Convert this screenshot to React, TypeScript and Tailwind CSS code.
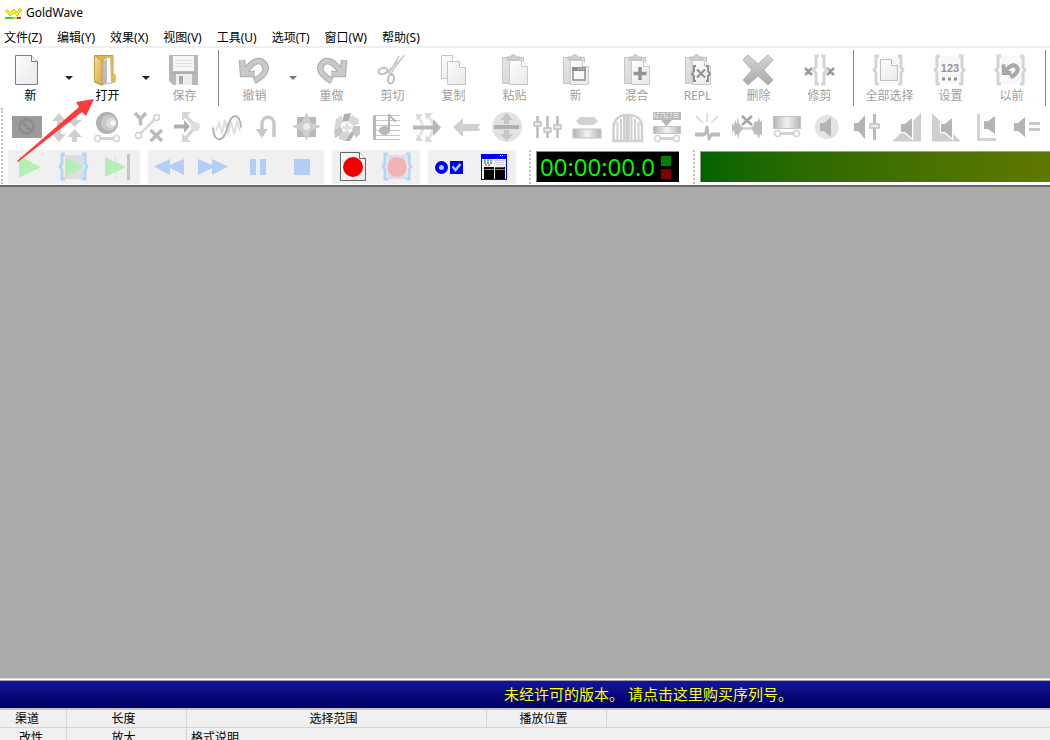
import { ReactNode } from "react";
import { clsx } from "clsx";

const MENU = ["文件(Z)", "编辑(Y)", "效果(X)", "视图(V)", "工具(U)", "选项(T)", "窗口(W)", "帮助(S)"];

function Svg({ children, w = 32 }: { children: ReactNode; w?: number }) {
  return (
    <svg
      aria-hidden="true"
      width={w}
      height={32}
      viewBox={`0 0 ${w} 32`}
      fill="none"
      className="block shrink-0 overflow-visible"
    >
      {children}
    </svg>
  );
}

// shared shapes

function Page({ x, y, w, h, stroke = "#c4c4c4" }: { x: number; y: number; w: number; h: number; stroke?: string }) {
  return (
    <g transform={`translate(${x + 0.5} ${y + 0.5})`} stroke={stroke}>
      <path d={`M0 0H${w - 6}L${w} 6V${h}H0Z`} fill="url(#paper)" />
      <path d={`M${w - 6} 0V6H${w}`} fill="#fff" />
    </g>
  );
}

function Clipboard({ children }: { children?: ReactNode }) {
  return (
    <>
      <rect x="4.5" y="3.5" width="21" height="26" fill="url(#steel)" stroke="#c6c6c6" />
      <path d="M9 6V3h4c0-3 5-3 5 0h4v3Z" fill="#d0d0d0" stroke="#bdbdbd" />
      <Page x={11} y={6} w={18} h={24} stroke="#cacaca" />
      {children}
    </>
  );
}

function Braces({ x1, x2, y1 = 2, y2 = 30, stroke = "#d4d4d4", d = 4 }: { x1: number; x2: number; y1?: number; y2?: number; stroke?: string; d?: number }) {
  const mid = (y1 + y2) / 2;
  return (
    <g stroke={stroke} strokeWidth="3">
      <path d={`M${x1 + d + 2} ${y1}H${x1 + d - 1}V${mid - 3}L${x1 + 1} ${mid}L${x1 + d - 1} ${mid + 3}V${y2}H${x1 + d + 2}`} />
      <path d={`M${x2 - d - 2} ${y1}H${x2 - d + 1}V${mid - 3}L${x2 - 1} ${mid}L${x2 - d + 1} ${mid + 3}V${y2}H${x2 - d - 2}`} />
    </g>
  );
}

function Speaker({ x, y, h = 20, outline = false }: { x: number; y: number; h?: number; outline?: boolean }) {
  return (
    <path
      transform={`translate(${x} ${y})`}
      d={`M0 ${h / 2 - 4}H4L11 0V${h}L4 ${h / 2 + 4}H0Z`}
      fill="#b4b4b4"
      stroke={outline ? "#fff" : "none"}
      strokeWidth="2.5"
      paintOrder="stroke"
    />
  );
}

function Link({ y = 27.5 }: { y?: number }) {
  return (
    <g stroke="#d2d2d2" strokeWidth="1.5" fill="#fff">
      <path d={`M9 ${y}H23`} strokeWidth="3" />
      <circle cx="6.5" cy={y} r="3" />
      <circle cx="25.5" cy={y} r="3" />
    </g>
  );
}

function CurvedArrow({ edge = "#ababab", fill = "#c9c9c9" }: { edge?: string; fill?: string }) {
  const d = "M4 6L5 20H17M6 19C13 9 19 5 24 8C31 13 28 21 16 27";
  return (
    <>
      <path d={d} stroke={edge} strokeWidth="6.5" />
      <path d={d} stroke={fill} strokeWidth="4.5" />
    </>
  );
}

const mainIcons: Record<string, ReactNode> = {
  new: <Page x={1} y={1} w={22} h={29} stroke="#7c7c7c" />,
  open: (
    <>
      <path d="M3.5 1.5H22V23H24V28H20L10 31L3.5 28Z" fill="#e2b64f" stroke="#c39a3d" />
      <path d="M13 6L17 3L21 5V29L13 30Z" fill="#fff" stroke="#a9bccb" />
      <path d="M11 10L16 5V29H11Z" fill="#b9bdc4" />
      <path d="M3.5 1.5L11 7V31L3.5 27Z" fill="url(#gold)" stroke="#c9a045" />
      <path d="M19 2H21.5V20H24.5V28H20Z" fill="#e0b757" />
    </>
  ),
  save: (
    <>
      <path d="M1 1H30V31H5L1 27Z" fill="#b8b8b8" />
      <rect x="5" y="2" width="21" height="15" fill="#f7f7f7" />
      <path d="M7 6.5H24M7 9.5H24M7 12.5H24" stroke="#ddd" />
      <path d="M3 19H28" stroke="#a6a6a6" />
      <rect x="8" y="20" width="16" height="11" fill="#ededed" />
      <rect x="11" y="22" width="4" height="8" fill="#aaa" />
    </>
  ),
  undo: <CurvedArrow />,
  redo: (
    <g transform="translate(33 0) scale(-1 1)">
      <CurvedArrow />
    </g>
  ),
  cut: (
    <>
      <path d="M29 1L14 20L11 18Z" fill="#d8d8d8" stroke="#c4c4c4" />
      <path d="M23 2L13 18L15 21Z" fill="#e0e0e0" stroke="#c4c4c4" />
      <ellipse cx="7" cy="17" rx="4.5" ry="3" stroke="#bdbdbd" strokeWidth="2" transform="rotate(-15 7 17)" />
      <ellipse cx="15" cy="25" rx="3" ry="4.5" stroke="#bdbdbd" strokeWidth="2" transform="rotate(12 15 25)" />
    </>
  ),
  copy: (
    <>
      <Page x={4} y={1} w={17} h={23} />
      <Page x={10} y={7} w={18} h={23} />
    </>
  ),
  paste: <Clipboard />,
  pasteNew: (
    <Clipboard>
      <rect x="14" y="14" width="12" height="12" fill="#f8f8f8" stroke="#8e8e8e" strokeWidth="1.5" />
      <path d="M13 15H27" stroke="#8e8e8e" strokeWidth="4" />
      <path d="M19 15H26" stroke="#eee" strokeDasharray="1.5 1" />
    </Clipboard>
  ),
  mix: (
    <Clipboard>
      <path d="M20 13V26M13.5 19.5H26.5" stroke="#939393" strokeWidth="3.5" />
    </Clipboard>
  ),
  repl: (
    <Clipboard>
      <path d="M15 12H13V17L11 20L13 22V27H15M25 12H27V17L29 20L27 22V27H25M16 15.5L24 23.5M24 15.5L16 23.5" stroke="#8e8e8e" strokeWidth="2" />
    </Clipboard>
  ),
  delete: <path d="M1 6L6 1L16 10L26 1L31 6L22 16L31 26L26 31L16 22L6 31L1 26L10 16Z" fill="url(#steel2)" stroke="#b4b4b4" strokeLinejoin="round" />,
  trim: (
    <>
      <path d="M2 14L9 21M9 14L2 21M24 14L31 21M31 14L24 21" stroke="#9a9a9a" strokeWidth="2.5" />
      <Braces x1={9} x2={25} d={5} />
    </>
  ),
  selectAll: (
    <>
      <rect x="6" y="2" width="20" height="28" fill="#f8f8f8" />
      <Braces x1={0} x2={31} />
      <Page x={7} y={5} w={17} h={21} stroke="#bebebe" />
    </>
  ),
  set: (
    <>
      <rect x="6" y="2" width="20" height="28" fill="#f8f8f8" />
      <Braces x1={0} x2={31} />
      <text x="16" y="18" textAnchor="middle" fontSize="11" fontWeight="bold" fill="#949494" className="font-['Liberation_Sans',sans-serif]">
        123
      </text>
      <path d="M8 25H11M14 25H17M20 25H23" stroke="#949494" strokeWidth="3" />
    </>
  ),
  previous: (
    <>
      <rect x="6" y="2" width="20" height="28" fill="#f8f8f8" />
      <Braces x1={0} x2={31} />
      <g transform="translate(6 7) scale(.6)">
        <CurvedArrow edge="#999" fill="#aaa" />
      </g>
    </>
  ),
};

type MainItem = { icon: string; label: string; enabled?: boolean; menu?: boolean } | null;

// null is a group separator
const mainItems: MainItem[] = [
  { icon: "new", label: "新", enabled: true, menu: true },
  { icon: "open", label: "打开", enabled: true, menu: true },
  { icon: "save", label: "保存" },
  null,
  { icon: "undo", label: "撤销", menu: true },
  { icon: "redo", label: "重做" },
  { icon: "cut", label: "剪切" },
  { icon: "copy", label: "复制" },
  { icon: "paste", label: "粘贴" },
  { icon: "pasteNew", label: "新" },
  { icon: "mix", label: "混合" },
  { icon: "repl", label: "REPL" },
  { icon: "delete", label: "删除" },
  { icon: "trim", label: "修剪" },
  null,
  { icon: "selectAll", label: "全部选择" },
  { icon: "set", label: "设置" },
  { icon: "previous", label: "以前" },
  null,
];

const effects: { name: string; art: ReactNode }[] = [
  {
    name: "Censor",
    art: (
      <>
        <rect x="1" y="5" width="30" height="22" fill="#9c9c9c" />
        <circle cx="15.5" cy="15.5" r="7" stroke="#8c8c8c" strokeWidth="2.5" />
        <path d="M11 11L20 20" stroke="#8c8c8c" strokeWidth="2.5" />
      </>
    ),
  },
  {
    name: "Compressor",
    art: (
      <g fill="#cfcfcf">
        <path d="M8 2L15 10H10V23H15L8 31L1 23H6V10H1Z" />
        <path d="M21 2H26V9H31L23.5 16L16 9H21ZM23.5 18L31 26H26V31H21V26H16Z" />
      </g>
    ),
  },
  {
    name: "Doppler",
    art: (
      <>
        <circle cx="16" cy="12" r="11" fill="#b0b0b0" />
        <circle cx="18" cy="12" r="8" fill="#c8c8c8" />
        <circle cx="20" cy="12" r="5" fill="#dcdcdc" />
        <circle cx="22" cy="12" r="2.5" fill="#fff" />
        <Link />
      </>
    ),
  },
  {
    name: "Expression",
    art: (
      <>
        <path d="M4 2L9.5 8L15 2M9.5 8V14.5M19.5 19L31 30M31 19L19.5 30" stroke="#bcbcbc" strokeWidth="3.5" />
        <path d="M9 23L24 8" stroke="#d8d8d8" strokeWidth="2.5" />
        <circle cx="25.5" cy="6.5" r="3" fill="#fff" stroke="#d0d0d0" strokeWidth="1.5" />
        <circle cx="7.5" cy="24.5" r="3" fill="#fff" stroke="#d0d0d0" strokeWidth="1.5" />
      </>
    ),
  },
  {
    name: "Echo",
    art: (
      <>
        <path d="M24 15L14 4M24 16L14 28" stroke="#d6d6d6" strokeWidth="3.5" />
        <path d="M11 1H20L11 10ZM11 31H20L11 22Z" fill="#d6d6d6" />
        <circle cx="24.5" cy="15.5" r="4.5" fill="#dedede" />
        <path d="M3 13.5H13V9L19 15.5L13 22V17.5H3Z" fill="#b0b0b0" />
      </>
    ),
  },
  {
    name: "Exponential",
    art: (
      <>
        <path d="M5 20L8 12L11 22L14 9L17 23L20 10L23 23L26 11L29 20" stroke="#e0e0e0" strokeWidth="2" />
        <path d="M2 16.5C3 32 12 32 16 18C20 1 29 1 30 16.5" stroke="#b4b4b4" strokeWidth="2" />
      </>
    ),
  },
  {
    name: "Reverse",
    art: (
      <>
        <path d="M11 19V13C11 4 23 4 23 13V26" stroke="#c8c8c8" strokeWidth="3.5" />
        <path d="M5 18H17L11 27Z" fill="#c8c8c8" />
      </>
    ),
  },
  {
    name: "Flanger",
    art: (
      <>
        <rect x="6" y="6" width="19" height="20" fill="#b8b8b8" />
        <path d="M15.5 1L20 11L30 15.5L20 20L15.5 30L11 20L1 15.5L11 11Z" fill="#cecece" />
        <circle cx="15.5" cy="15.5" r="3.5" fill="#ececec" />
      </>
    ),
  },
  {
    name: "Interpolate",
    art: (
      <>
        <path d="M13 3L20 2L18 10L11 11ZM20 21L25 20L19 30H14Z" fill="#b0b0b0" />
        <path d="M5 8L11 4V12L9 17L3 19ZM21 4L28 8V13L22 15L17 10Z" fill="#d8d8d8" />
        <path d="M3 19L10 16L12 21L8 25L4 27ZM22 15H29V23L25 27L21 20Z" fill="#c6c6c6" />
        <path d="M8 25L13 20L19 22L14 30L8 28Z" fill="#d4d4d4" />
        <path d="M16 12V21M11.5 16.5H20.5" stroke="#dedede" strokeWidth="3" />
      </>
    ),
  },
  {
    name: "Pitch",
    art: (
      <>
        <path d="M2 4.5H29M2 9.5H29M2 14.5H29M2 19.5H29M2 24.5H29M2 28.5H29" stroke="#c6c6c6" />
        <path d="M3.5 4V29" stroke="#b8b8b8" strokeWidth="3" />
        <ellipse cx="13.5" cy="19.5" rx="5.5" ry="4.5" fill="#b8b8b8" />
        <path d="M18 20V3C18 7 24 7 24 11" stroke="#b4b4b4" strokeWidth="2" />
      </>
    ),
  },
  {
    name: "Mechanize",
    art: (
      <>
        <path d="M12 15L8 6M22 14L18 5M12 18L8 27M22 19L18 28" stroke="#e4e4e4" strokeWidth="3" />
        <path d="M5 3H12L6 10ZM14 2H22L15 9ZM5 30H12L6 23ZM14 31H22L15 24Z" fill="#d8d8d8" />
        <path d="M2 14.5H22V8L30 16.5L22 25V18.5H2Z" fill="#b8b8b8" />
      </>
    ),
  },
  { name: "Offset", art: <path d="M2 16L12 7V13H30L27 16L30 20H12V26Z" fill="#d0d0d0" /> },
  {
    name: "Dynamics",
    art: (
      <>
        <circle cx="16" cy="16" r="15" fill="#e2e2e2" />
        <path d="M15.5 2L22 9H18V13H13V9H9ZM13 19H18V23H22L15.5 30L9 23H13Z" fill="#c6c6c6" />
        <path d="M3 16H28" stroke="#b0b0b0" strokeWidth="4" />
      </>
    ),
  },
  {
    name: "Equalizer",
    art: (
      <>
        <path d="M6.5 5V27M16.5 5V27M26.5 5V27" stroke="#bababa" strokeWidth="2.5" />
        <g fill="#ededed" stroke="#c0c0c0" strokeWidth="1.5">
          <rect x="3" y="11" width="7" height="4" />
          <rect x="13" y="17" width="7" height="4" />
          <rect x="23" y="14" width="7" height="4" />
        </g>
      </>
    ),
  },
  {
    name: "Low pass",
    art: (
      <>
        <path d="M9 6H23L27 10L23 14H9L5 10Z" fill="#d2d2d2" />
        <rect x="2" y="18" width="28" height="9" fill="url(#tube)" stroke="#c4c4c4" />
      </>
    ),
  },
  {
    name: "Noise gate",
    art: (
      <g stroke="#d0d0d0" strokeWidth="2">
        <path d="M2.5 30V17C2.5 9 8 4 15.5 4V30ZM17.5 4C26 4 31 9 31 17V30H17.5Z" strokeWidth="2.5" />
        <path d="M6.5 11V29M10 8V29M13 5V29M20.5 5V29M24 8V29M27.5 11V29" />
      </g>
    ),
  },
  {
    name: "Noise reduction",
    art: (
      <>
        <rect x="2" y="1" width="28" height="8" fill="#bcbcbc" />
        <path d="M3 2.5H29" stroke="#f4f4f4" strokeDasharray="1 2 2 1 1 1 3 2" />
        <path d="M3 4.5H29" stroke="#f4f4f4" strokeDasharray="2 1 1 3 1 2" />
        <path d="M3 6.5H29" stroke="#f4f4f4" strokeDasharray="1 1 2 2 1 3" />
        <path d="M10 9H21L15.5 15Z" fill="#b4b4b4" />
        <rect x="2.5" y="15.5" width="27" height="7" fill="url(#tube)" stroke="#c4c4c4" />
        <Link />
      </>
    ),
  },
  {
    name: "Pop and click",
    art: (
      <>
        <path d="M16 2V11M5 5L12 12M27 5L20 12" stroke="#e0e0e0" strokeWidth="2" />
        <path d="M4 23.5H13M20 23.5H29" stroke="#bdbdbd" strokeWidth="4" />
        <path d="M11 23.5H14L16 15L18 29L20 23" stroke="#bababa" strokeWidth="2.5" />
      </>
    ),
  },
  {
    name: "Silence reduction",
    art: (
      <>
        <path d="M10 17.5H22" stroke="#d0d0d0" strokeWidth="2.5" />
        <path d="M1 12L3 15L4 9L6 13V6L8 12L10 15L12 17L10 20L8 23V28L6 23L4 25L3 19L1 22ZM31 9L29 11L28 6L26 11L24 10L22 15L20 17L22 20L24 24L26 23L28 28L29 23L31 25Z" fill="#bcbcbc" />
        <path d="M11 5L21 14M21 5L11 14" stroke="#a4a4a4" strokeWidth="2.5" />
      </>
    ),
  },
  {
    name: "Smoother",
    art: (
      <>
        <rect x="2.5" y="5.5" width="27" height="12" fill="url(#tube)" stroke="#c4c4c4" />
        <Link y={22.5} />
      </>
    ),
  },
  {
    name: "Volume",
    art: (
      <>
        <circle cx="16" cy="16" r="12" fill="#e4e4e4" />
        <Speaker x={9} y={6} />
      </>
    ),
  },
  {
    name: "Change volume",
    art: (
      <>
        <Speaker x={3} y={4} h={24} />
        <path d="M23.5 3V29" stroke="#bababa" strokeWidth="3" />
        <rect x="19" y="13" width="9" height="4" fill="#eee" stroke="#c0c0c0" strokeWidth="1.5" />
      </>
    ),
  },
  {
    name: "Fade in",
    art: (
      <>
        <path d="M1 30.5L30 2V30.5Z" fill="#cfcfcf" />
        <Speaker x={10} y={7} outline />
      </>
    ),
  },
  {
    name: "Fade out",
    art: (
      <>
        <path d="M1 2L30 30.5H1Z" fill="#cfcfcf" />
        <Speaker x={10} y={7} outline />
      </>
    ),
  },
  {
    name: "Match volume",
    art: (
      <>
        <path d="M7.5 3V28.5H25" stroke="#d2d2d2" strokeWidth="3" />
        <Speaker x={13} y={5} h={18} />
      </>
    ),
  },
  {
    name: "Maximize volume",
    art: (
      <>
        <Speaker x={3} y={6} />
        <path d="M18 12.5H29M18 18.5H29" stroke="#cacaca" strokeWidth="3" />
      </>
    ),
  },
];

const transport: { name: string; art: ReactNode }[][] = [
  [
    { name: "Play", art: <path d="M5 5L27 16L5 27Z" fill="#b4f0b4" /> },
    {
      name: "Play selection",
      art: (
        <>
          <rect x="7" y="4" width="18" height="24" fill="#dcdee2" />
          <path d="M7 6L26 16L7 26Z" fill="#b4f0b4" />
          <Braces x1={1} x2={30} y1={3} y2={28} stroke="#b4d6f4" />
        </>
      ),
    },
    {
      name: "Play to end",
      art: (
        <>
          <path d="M13.5 4V29" stroke="#dedede" />
          <path d="M3 6L24 16L3 26Z" fill="#b4f0b4" />
          <path d="M26.5 3V29" stroke="#c4c4c4" strokeWidth="3" />
        </>
      ),
    },
  ],
  [
    { name: "Rewind", art: <path d="M0 15.5L16 8V14L30 8V24L16 17V24Z" fill="#b4ccf6" /> },
    { name: "Fast forward", art: <path d="M30 15.5L14 8V14L0 8V24L14 17V24Z" fill="#b4ccf6" /> },
    { name: "Pause", art: <path d="M8 8H14V24H8ZM18 8H24V24H18Z" fill="#b4ccf6" /> },
    { name: "Stop", art: <path d="M8 8H24V24H8Z" fill="#b4ccf6" /> },
  ],
  [
    {
      name: "Record new",
      art: (
        <>
          <Page x={2} y={1} w={25} h={28} stroke="#666" />
          <circle cx="15" cy="16" r="10" fill="#f00000" />
        </>
      ),
    },
    {
      name: "Record selection",
      art: (
        <>
          <rect x="6" y="4" width="18" height="24" fill="#dcdee2" />
          <circle cx="15" cy="16" r="10" fill="#f2b4b4" />
          <Braces x1={0} x2={30} y1={3} y2={28} stroke="#b4d6f4" />
        </>
      ),
    },
  ],
  [
    {
      name: "Control properties",
      art: (
        <>
          <circle cx="7.5" cy="16.5" r="6.5" fill="#0000f0" />
          <circle cx="7.5" cy="16.5" r="2.5" fill="#a8c8ff" />
          <rect x="16" y="10" width="13" height="13" fill="#0000f0" />
          <path d="M18.5 15.5L21.5 19L26.5 13" stroke="#a8d0ff" strokeWidth="2.5" />
        </>
      ),
    },
    {
      name: "Control window",
      art: (
        <>
          <rect x="3" y="3" width="26" height="26" fill="#0000f0" />
          <rect x="4" y="8" width="24" height="20" fill="#f0f0f0" />
          <path d="M22 4.5H23M24 4.5H25" stroke="#fff" />
          <path d="M26 4.5H28" stroke="#f00" />
          <path d="M6 9.5H15" stroke="#4c4" strokeWidth="2" strokeDasharray="2 1" />
          <path d="M6 12H15" stroke="#22f" strokeDasharray="2 1" />
          <path d="M7 14H13" stroke="#e22" strokeDasharray="2 1" />
          <path d="M17 9.5H26M17 11.5H26M17 13.5H26" stroke="#ccc" />
          <path d="M6 16H16V28H6ZM17 16H27V28H17Z" fill="#000" />
          <path d="M6 18.5H27" stroke="#888" />
          <path d="M17 16.5H26" stroke="#080" />
        </>
      ),
    },
  ],
];

function Grip() {
  return (
    <div className="flex w-2 shrink-0 self-stretch pl-px">
      <div className="w-px border-l-2 border-dotted border-[#c0c0c0]" />
    </div>
  );
}

function MainButton({ item }: { item: NonNullable<MainItem> }) {
  return (
    <div className="flex shrink-0">
      <button
        type="button"
        aria-disabled={!item.enabled}
        className={clsx(
          "flex w-[61px] flex-col items-center whitespace-nowrap pt-1.5 text-xs",
          item.enabled ? "text-black" : "text-[#a0a0a0]"
        )}
      >
        <Svg w={33}>{mainIcons[item.icon]}</Svg>
        <span className="mt-0.5 leading-4">{item.label}</span>
      </button>
      {item.menu && (
        <button type="button" aria-label={`${item.label} ▾`} className="flex w-4 items-center justify-center">
          <svg width="8" height="4" viewBox="0 0 8 4" className="block">
            <path d="M0 0H8L4 4Z" fill={item.enabled ? "#222" : "#777"} />
          </svg>
        </button>
      )}
    </div>
  );
}

function Defs() {
  return (
    <svg width="0" height="0" className="absolute" aria-hidden="true">
      <defs>
        <linearGradient id="paper" x1="0" y1="0" x2="1" y2="1">
          <stop offset="0" stopColor="#fdfdfd" />
          <stop offset="1" stopColor="#e8e8e8" />
        </linearGradient>
        <linearGradient id="steel" x1="0" y1="0" x2="1" y2="1">
          <stop offset="0" stopColor="#e6e6e6" />
          <stop offset="1" stopColor="#cfcfcf" />
        </linearGradient>
        <linearGradient id="steel2" x1="0" y1="0" x2="0" y2="1">
          <stop offset="0" stopColor="#d4d4d4" />
          <stop offset="1" stopColor="#a9a9a9" />
        </linearGradient>
        <linearGradient id="gold" x1="0" y1="0" x2="1" y2="1">
          <stop offset="0" stopColor="#f6dc90" />
          <stop offset="1" stopColor="#dba93f" />
        </linearGradient>
        <linearGradient id="tube" x1="0" y1="0" x2="1" y2="0">
          <stop offset="0" stopColor="#b4b4b4" />
          <stop offset=".5" stopColor="#f2f2f2" />
          <stop offset="1" stopColor="#b4b4b4" />
        </linearGradient>
      </defs>
    </svg>
  );
}

function StatusCell({ className, children }: { className?: string; children?: ReactNode }) {
  return (
    <div className={clsx("shrink-0 whitespace-nowrap border-r border-[#d5d5d5] leading-[18px]", className)}>
      {children}
    </div>
  );
}

export default function App() {
  return (
    <div className="relative flex h-screen flex-col overflow-hidden bg-white font-['Noto_Sans','Noto_Sans_CJK_SC',sans-serif] text-xs text-black">
      <Defs />

      <header className="flex h-[26px] shrink-0 items-center gap-1 pl-[5px]">
        <svg width="17" height="12" viewBox="0 0 17 12" aria-hidden="true">
          <path d="M1 3L5 7L9 4L12 7L16 2" fill="none" stroke="#b8a800" strokeWidth="3" />
          <path d="M1 3L5 7L9 4L12 7L16 2" fill="none" stroke="#ffee20" strokeWidth="2" />
          <path d="M0 10H8V12H0Z" fill="#20e020" />
          <path d="M8 10H12V12H8Z" fill="#f0c020" />
          <path d="M12 10H16V12H12Z" fill="#f02020" />
        </svg>
        <h1 className="leading-4">GoldWave</h1>
      </header>

      <nav className="flex h-[22px] shrink-0 items-end gap-[15px] border-b-2 border-[#f0f0f0] pl-1">
        {MENU.map((m) => (
          <button key={m} type="button" className="whitespace-nowrap leading-4">
            {m}
          </button>
        ))}
      </nav>

      <div className="flex h-[60px] shrink-0">
        {mainItems.map((item, i) =>
          item ? (
            <MainButton key={i} item={item} />
          ) : (
            <div key={i} className="flex w-[9px] shrink-0 py-0.5 pl-[3px]">
              <div className="w-px bg-[#8a8a8a]" />
            </div>
          )
        )}
      </div>

      <div className="flex shrink-0">
        <Grip />
        <div className="flex min-w-0 flex-1 flex-col">
          <div className="flex h-[42px] overflow-hidden pt-[3px]">
            {effects.map((e) => (
              <button key={e.name} type="button" aria-label={e.name} className="flex w-10 shrink-0 pl-[3px]">
                <Svg>{e.art}</Svg>
              </button>
            ))}
          </div>

          <div className="flex h-[34px] gap-2">
            {transport.map((group, i) => (
              <div key={i} className="flex shrink-0 bg-[#f0f0f0]">
                {group.map((t) => (
                  <button key={t.name} type="button" aria-label={t.name} className="flex w-11 justify-center pt-px">
                    <Svg>{t.art}</Svg>
                  </button>
                ))}
              </div>
            ))}
            <div className="flex min-w-0 flex-1 pl-1">
              <Grip />
              <div className="mb-0.5 mt-px flex w-[143px] shrink-0 items-center justify-between border-l border-t border-[#888] bg-black pl-[3px] pr-2">
                <output className="font-['Open_Sans',sans-serif] text-2xl leading-7 text-[#00ff00]">00:00:00.0</output>
                <span className="flex flex-col gap-[3px]">
                  <span className="size-2.5 bg-[#008000]" />
                  <span className="size-2.5 bg-[#800000]" />
                </span>
              </div>
              <div className="flex shrink-0 pl-[13px]">
                <Grip />
              </div>
              <div className="mb-0.5 mt-px flex-1 border-l border-t border-[#999] bg-linear-to-r from-[#006400] to-[#5f7800]" />
            </div>
          </div>
        </div>
      </div>

      <main className="mt-px flex-1 border-b border-t-2 border-b-[#d8d8d8] border-t-[#696969] bg-[#ababab]" />

      <button
        type="button"
        className="mt-px flex h-[28px] shrink-0 items-start border-t border-[#a0a0a0] bg-linear-to-b from-[#16169a] to-[#000060] pl-[504px] pt-[3px] text-[15px] leading-5 text-[#ffff00]"
      >
        未经许可的版本。 请点击这里购买序列号。
      </button>

      <footer className="-mb-2 shrink-0 border-t-2 border-[#c4c4c4] bg-[#f0f0f0] text-center">
        <div className="flex h-[18px] border-b border-[#d5d5d5]">
          <StatusCell className="w-[67px] pr-3">渠道</StatusCell>
          <StatusCell className="w-[120px] pr-1.5">长度</StatusCell>
          <StatusCell className="w-[300px] pr-1.5">选择范围</StatusCell>
          <StatusCell className="w-[120px] pr-1.5">播放位置</StatusCell>
        </div>
        <div className="flex h-5 pt-px">
          <StatusCell className="w-[67px] pr-1">改性</StatusCell>
          <StatusCell className="w-[120px] pr-1.5">放大</StatusCell>
          <div className="whitespace-nowrap pl-1 leading-[18px]">格式说明</div>
        </div>
      </footer>

      {/* callout arrow pointing at the Open button */}
      <svg width="80" height="66" viewBox="0 0 80 66" className="absolute left-4 top-[97px]" aria-hidden="true">
        <path d="M1 64L63 10L60 5L78 2L70 19L66 15L2 65Z" fill="#fb3c3a" />
      </svg>
    </div>
  );
}
